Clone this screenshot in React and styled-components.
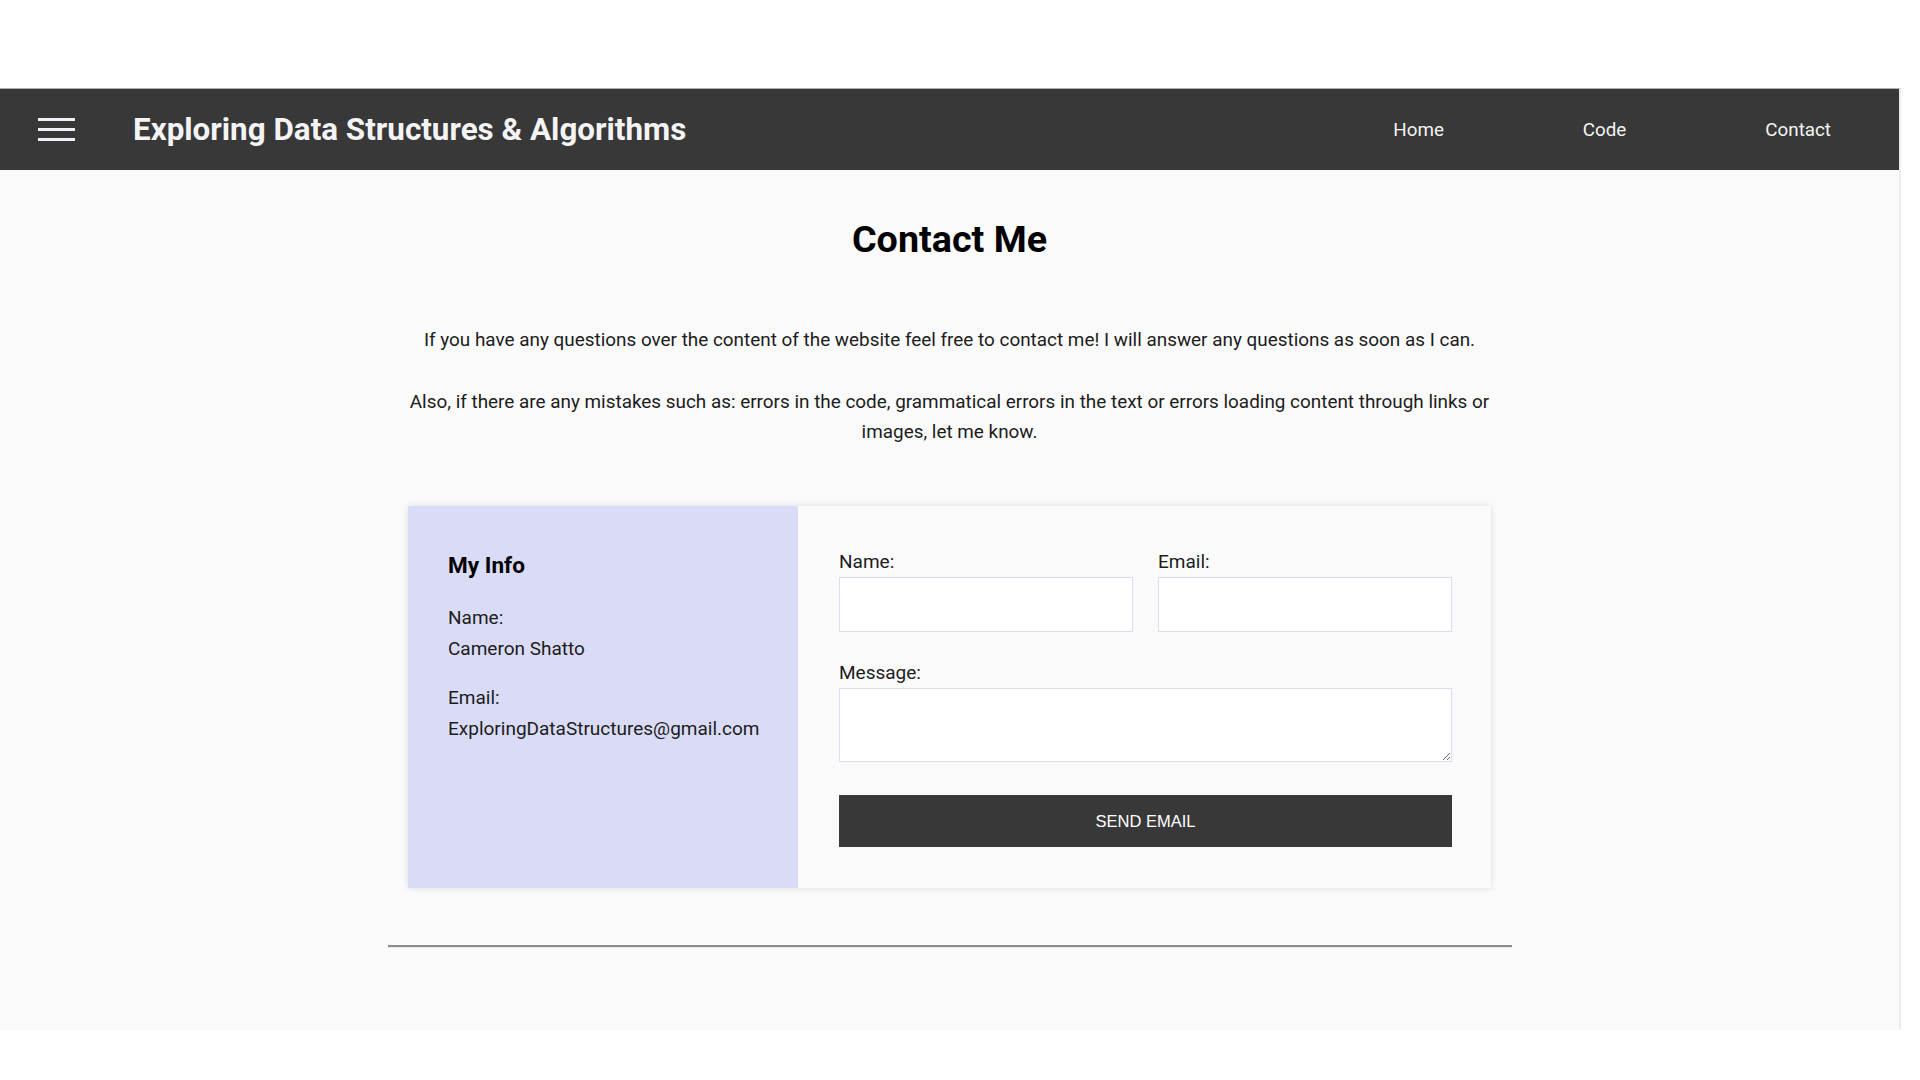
import React from "react";
import styled, { createGlobalStyle } from "styled-components";

const GlobalStyle = createGlobalStyle`
  html, body { margin: 0; padding: 0; background: #ffffff; }
  * { box-sizing: border-box; }
`;

const FONT = `Roboto, "Liberation Sans", Arial, sans-serif`;

const Page = styled.div`
  margin-top: 88px;
  width: 1901px;
  height: 942px;
  background: #fafafa;
  border-top: 1px solid #b0b0b0;
  border-right: 2px solid #ececec;
  font-family: ${FONT};
  color: #1a1a1a;
  display: flex;
  flex-direction: column;
`;

const NavBar = styled.header`
  flex: none;
  height: 81px;
  background: #383838;
  display: flex;
  align-items: center;
  padding: 0 68px 0 38px;
`;

const Burger = styled.button`
  width: 37px;
  height: 23px;
  padding: 0;
  border: 0;
  background: none;
  display: flex;
  flex-direction: column;
  justify-content: space-between;
  cursor: pointer;
`;

const BurgerBar = styled.span`
  display: block;
  height: 3px;
  width: 100%;
  background: #f0f2f8;
`;

const SiteTitle = styled.h1`
  margin: 0 0 0 58px;
  font-size: 31.4px;
  font-weight: 700;
  color: #f4f4f6;
`;

const NavLinks = styled.nav`
  margin-left: auto;
  display: flex;
  gap: 139px;
`;

const NavLink = styled.a`
  color: #f4f4f4;
  font-size: 18.8px;
  text-decoration: none;
`;

const Main = styled.main`
  width: 1083px;
  margin: 0 auto;
  display: flex;
  flex-direction: column;
  align-items: center;
`;

const Heading = styled.h2`
  margin: 46px 0 0;
  font-size: 37.7px;
  font-weight: 700;
  line-height: 46px;
  color: #000;
`;

const Intro = styled.p`
  margin: ${(p) => p.$top}px 0 0;
  font-size: 18.9px;
  line-height: 30px;
  text-align: center;
  color: #1c1c1c;
`;

const Card = styled.section`
  margin-top: 59px;
  width: 100%;
  height: 382px;
  display: flex;
  background: #fafafa;
  box-shadow: 0 0 6px rgba(0, 0, 0, 0.12);
`;

const InfoPanel = styled.div`
  width: 390px;
  background: #dadcf7;
  padding: 45px 40px;
  font-size: 19px;
  line-height: 31px;
  color: #1c1c1c;
`;

const InfoTitle = styled.h3`
  margin: 0 0 21px;
  font-size: 22.6px;
  line-height: 30px;
  font-weight: 700;
  color: #000;
`;

const InfoBlock = styled.div`
  margin-bottom: 18px;
`;

const FormPanel = styled.form`
  flex: 1;
  padding: 41px 39px 0 41px;
  display: flex;
  flex-direction: column;
`;

const FieldRow = styled.div`
  display: flex;
  gap: 25px;
`;

const Field = styled.label`
  flex: ${(p) => (p.$grow ? 1 : "none")};
  display: flex;
  flex-direction: column;
  font-size: 19px;
  line-height: 30px;
  color: #1c1c1c;
  margin-top: ${(p) => p.$top || 0}px;
`;

const TextInput = styled.input`
  height: 55px;
  border: 1px solid #dcdcf5;
  background: #fff;
  outline: none;
  font-family: inherit;
`;

const TextArea = styled.textarea`
  height: 74px;
  border: 1px solid #dcdcf5;
  background: #fff;
  outline: none;
  font-family: inherit;
  resize: vertical;
`;

const SendButton = styled.button`
  margin-top: 33px;
  height: 52px;
  flex: none;
  border: 0;
  background: #383838;
  color: #fff;
  font-family: "Liberation Sans", Arial, sans-serif;
  font-size: 16.5px;
  cursor: pointer;
`;

const Rule = styled.hr`
  width: 1124px;
  margin: 57px auto 0;
  border: 0;
  border-top: 2px solid #8c8c8c;
  border-bottom: 1px solid #e6e6e6;
`;

export default function App() {
  return (
    <>
      <GlobalStyle />
      <Page>
        <NavBar>
          <Burger aria-label="menu">
            <BurgerBar />
            <BurgerBar />
            <BurgerBar />
          </Burger>
          <SiteTitle>Exploring Data Structures &amp; Algorithms</SiteTitle>
          <NavLinks>
            <NavLink href="#">Home</NavLink>
            <NavLink href="#">Code</NavLink>
            <NavLink href="#">Contact</NavLink>
          </NavLinks>
        </NavBar>
        <Main>
          <Heading>Contact Me</Heading>
          <Intro $top={63}>
            If you have any questions over the content of the website feel free to contact me! I will answer any questions as soon as I can.
          </Intro>
          <Intro $top={32}>
            Also, if there are any mistakes such as: errors in the code, grammatical errors in the text or errors loading content through links or images, let me know.
          </Intro>
          <Card>
            <InfoPanel>
              <InfoTitle>My Info</InfoTitle>
              <InfoBlock>
                <div>Name:</div>
                <div>Cameron Shatto</div>
              </InfoBlock>
              <InfoBlock>
                <div>Email:</div>
                <div>ExploringDataStructures@gmail.com</div>
              </InfoBlock>
            </InfoPanel>
            <FormPanel onSubmit={(e) => e.preventDefault()}>
              <FieldRow>
                <Field $grow>
                  Name:
                  <TextInput type="text" />
                </Field>
                <Field $grow>
                  Email:
                  <TextInput type="email" />
                </Field>
              </FieldRow>
              <Field $top={26}>
                Message:
                <TextArea />
              </Field>
              <SendButton type="submit">SEND EMAIL</SendButton>
            </FormPanel>
          </Card>
        </Main>
        <Rule />
      </Page>
    </>
  );
}
